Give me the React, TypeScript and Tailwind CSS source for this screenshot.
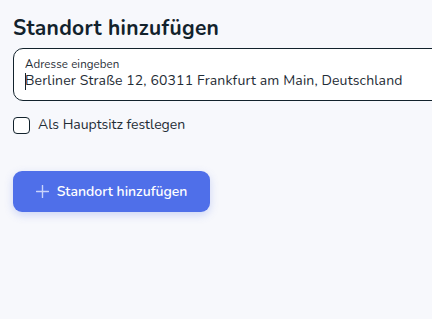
import React from "react";

export default function App() {
  return (
    <div
      className="w-[432px] h-[319px] overflow-hidden bg-[#f7f8fc] pl-[13px] pt-[14px]"
      style={{ fontFamily: '"Nunito", "Lato", "Noto Sans", sans-serif' }}
    >
      <h1 className="text-[21px] font-bold leading-[28px] text-[#12222c] tracking-[0.3px]">
        Standort hinzufügen
      </h1>
      <div className="mt-[6px] w-[440px] h-[53px] rounded-[10px] border border-[#12222c] bg-white pl-[11px] pt-[8px]">
        <div className="text-[11.5px] leading-[14px] text-[#1f2d36] tracking-[0.1px]">Adresse eingeben</div>
        <div className="flex items-center text-[14px] leading-[20px] text-[#1f2d36] tracking-[0.15px]">
          <span className="inline-block w-[1px] h-[17px] bg-[#12222c] mr-[-1px]" />
          <span>Berliner Straße 12, 60311 Frankfurt am Main, Deutschland</span>
        </div>
      </div>
      <label className="mt-[14px] flex items-center gap-[8px]">
        <span className="w-[17px] h-[17px] rounded-[4px] border-[1.5px] border-[#12222c] bg-white" />
        <span className="text-[14px] leading-[20px] text-[#1f2d36]">Als Hauptsitz festlegen</span>
      </label>
      <button className="mt-[36px] w-[197px] h-[41px] rounded-[9px] bg-[#4f6fe9] text-white flex items-center justify-center gap-[8px] shadow-[0_3px_8px_rgba(79,111,233,0.25)]">
        <svg width="13" height="13" viewBox="0 0 13 13" className="text-[#c9d3fb]">
          <path d="M6.5 0.5v12M0.5 6.5h12" stroke="currentColor" strokeWidth="1.4" strokeLinecap="round" />
        </svg>
        <span className="text-[14px] font-semibold leading-[20px]">Standort hinzufügen</span>
      </button>
    </div>
  );
}
